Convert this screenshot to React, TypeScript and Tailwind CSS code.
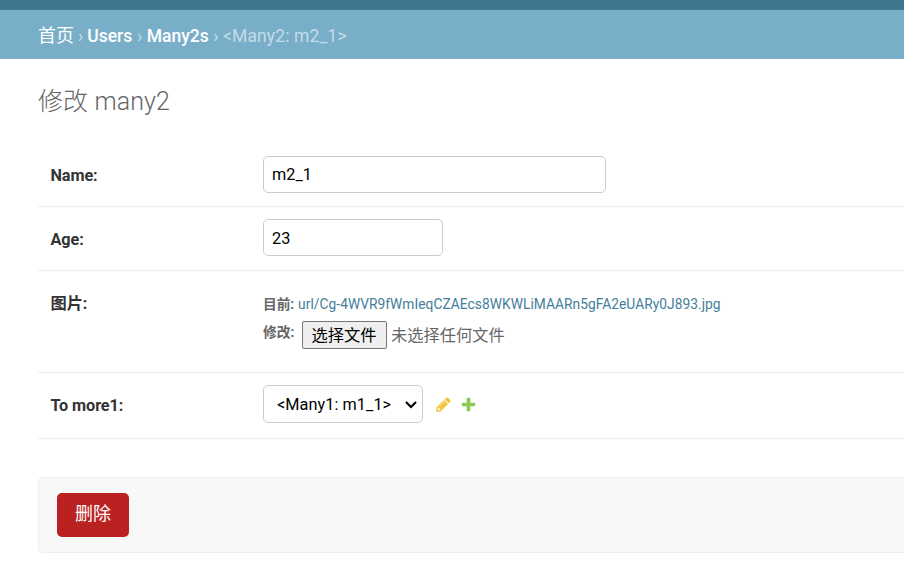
import type { ReactNode } from 'react';

function Row({ label, className, labelClass, children }: { label: string; className: string; labelClass: string; children: ReactNode }) {
  return (
    <div className={`flex border-b border-[#eeeeee] pl-[12.5px] ${className}`}>
      <label className={`w-[212.5px] shrink-0 text-[16.25px] leading-[20px] font-bold tracking-[-0.1px] text-[#333333] ${labelClass}`}>{label}</label>
      {children}
    </div>
  );
}

function Crumb({ children }: { children: ReactNode }) {
  return <a href="#" className="font-medium text-white">{children}</a>;
}

const input = 'h-[37px] rounded-[5px] border border-[#cccccc] bg-white px-2 text-[16.25px] leading-[20px] text-black outline-none';

export default function App() {
  return (
    <div className="h-[570px] w-full overflow-hidden bg-white font-['Roboto','Noto_Sans_CJK_SC',sans-serif] text-[#666666]">
      <header className="h-[10px] bg-[#417690]" />
      <nav className="flex h-[49px] items-center gap-[4px] bg-[#79aec8] pl-[38px] pt-[2px] text-[17.5px] leading-[22px] whitespace-nowrap text-[#c4dce8]">
        <a href="#" className="text-[18px] text-white">首页</a>
        <span>›</span>
        <Crumb>Users</Crumb>
        <span className="px-[0.6px]">›</span>
        <Crumb>Many2s</Crumb>
        <span className="pl-[0.5px]">›</span>
        <span className="pl-[0.5px] tracking-[0.12px]">&lt;Many2: m2_1&gt;</span>
      </nav>
      <main className="pl-[38px]">
        <h1 className="h-[84px] pt-[28px] text-[25px] leading-[30px] font-light tracking-[0.1px]">修改 many2</h1>
        <form>
          <Row label="Name:" className="h-[64px] pt-[13px]" labelClass="pt-[10px]">
            <input className={`${input} w-[343px]`} defaultValue="m2_1" />
          </Row>
          <Row label="Age:" className="h-[64px] pt-[12px]" labelClass="pt-[11px]">
            <input className={`${input} w-[180px] pt-[2px]`} defaultValue="23" />
          </Row>
          <Row label="图片:" className="h-[102px] pt-[13px]" labelClass="pt-[10px]">
            <div className="text-[13.75px] leading-[20px] whitespace-nowrap">
              <div className="flex gap-[4px] pt-[10px]">
                <span className="font-bold tracking-[-0.1px]">目前:</span>
                <a href="#" className="tracking-[0.05px] text-[#447e9b]">url/Cg-4WVR9fWmIeqCZAEcs8WKWLiMAARn5gFA2eUARy0J893.jpg</a>
              </div>
              <div className="flex pt-[7px]">
                <span className="w-[39px] pt-px font-bold">修改:</span>
                <button type="button" className="h-[28px] w-[85px] rounded-[2px] border border-[#767676] bg-[#efefef] pt-px pr-px text-[16.25px] leading-[26px] text-black">选择文件</button>
                <span className="pt-px pl-[4px] text-[16.25px] leading-[28px]">未选择任何文件</span>
              </div>
            </div>
          </Row>
          <Row label="To more1:" className="h-[66px] pt-[12px]" labelClass="pt-[11px]">
            <button type="button" className="flex h-[38px] w-[160px] items-center justify-between rounded-[5px] border border-[#cccccc] bg-white pr-[5px] pl-[13px] text-[16.25px] text-black">
              <span className="pt-[3px] tracking-[0.06px] whitespace-nowrap">&lt;Many1: m1_1&gt;</span>
              <svg className="mt-px" width="12" height="8" viewBox="0 0 12 8" fill="none" stroke="#000" strokeWidth="2.2">
                <path d="M1 1l5 5 5-5" />
              </svg>
            </button>
            <svg className="mt-[11px] ml-[12px] size-[17px]" viewBox="0 0 1792 1792">
              <path fill="#f2c43a" d="M491 1536l91-91-235-235-91 91v107h128v128h107zm523-928q0-22-22-22-10 0-17 7l-542 542q-7 7-7 17 0 22 22 22 10 0 17-7l542-542q7-7 7-17zm-54-192l416 416-832 832h-416v-416zm683 96q0 53-37 90l-166 166-416-416 166-165q36-38 90-38 53 0 91 38l235 234q37 39 37 91z" />
            </svg>
            <svg className="mt-[11px] ml-[8px] size-[17px]" viewBox="0 0 1792 1792">
              <path fill="#8bcb52" d="M1600 796v192q0 40-28 68t-68 28h-416v416q0 40-28 68t-68 28h-192q-40 0-68-28t-28-68v-416h-416q-40 0-68-28t-28-68v-192q0-40 28-68t68-28h416v-416q0-40 28-68t68-28h192q40 0 68 28t28 68v416h416q40 0 68 28t28 68z" />
            </svg>
          </Row>
          <div className="mt-[38px] h-[76px] rounded-l-[5px] border border-r-0 border-[#eeeeee] bg-[#f8f8f8] pt-[15px] pl-[18px]">
            <button type="button" className="h-[44px] w-[72px] rounded-[5px] bg-[#ba2121] pb-[3px] text-[18px] text-white">删除</button>
          </div>
        </form>
      </main>
    </div>
  );
}
